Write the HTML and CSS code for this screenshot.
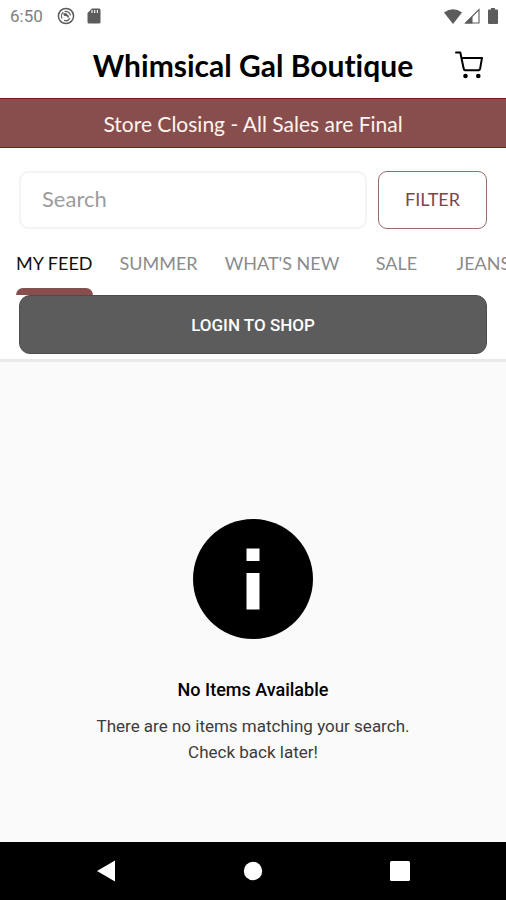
FILE: index.html
```html
<!DOCTYPE html>
<html lang="en">
<head>
<meta charset="utf-8">
<meta name="viewport" content="width=device-width, initial-scale=1">
<title>Whimsical Gal Boutique</title>
<link rel="stylesheet" href="styles.css">
</head>
<body>
<div class="app">
  <div class="status">
    <span class="clock">6:50</span>
    <svg class="status-sync" viewBox="0 0 18 18" width="18" height="18" aria-hidden="true">
      <circle cx="9" cy="9" r="7.6" fill="none" stroke="currentColor" stroke-width="1.5"/>
      <path d="M5.2 11.5A4.6 4.6 0 0 1 6.3 5.3M7.6 4.6A4.6 4.6 0 0 1 13.5 8.5M12.9 11.3A4.6 4.6 0 0 1 7 13.2" fill="none" stroke="currentColor" stroke-width="1.2"/>
      <path d="M6 6.4l3-.4 3 2.900-.7 2.300-1.600-2L7 8.700z" fill="currentColor"/>
    </svg>
    <svg class="status-card" viewBox="0 0 14 16" width="14" height="16" aria-hidden="true">
      <path d="M5 0.5h7a1.5 1.5 0 0 1 1.5 1.5v12a1.5 1.5 0 0 1-1.5 1.5H2A1.5 1.5 0 0 1 .5 14V5z" fill="currentColor"/>
      <path d="M5 2v3M7.7 2v3M10.4 2v3" stroke="#fff" stroke-width="1.1"/>
    </svg>
    <span class="status-right">
      <svg viewBox="0 0 18 15" width="18" height="15" aria-hidden="true"><path d="M9 15L0 3.400Q9-3 18 3.400z" fill="currentColor"/></svg>
      <svg viewBox="0 0 16 16" width="16" height="16" aria-hidden="true"><path d="M1.500 15L15 1.500V15z" fill="none" stroke="currentColor" stroke-width="1.100"/><path d="M1 15.500L8.500 8v7.500z" fill="currentColor"/></svg>
      <svg class="battery" viewBox="0 0 10 16" width="10" height="16" aria-hidden="true"><path d="M3 0h4v1.600h2a1 1 0 0 1 1 1V15a1 1 0 0 1-1 1H1a1 1 0 0 1-1-1V2.600a1 1 0 0 1 1-1h2z" fill="currentColor"/></svg>
    </span>
  </div>

  <header class="header">
    <h1 class="title">Whimsical Gal Boutique</h1>
    <button class="cart" type="button" aria-label="Cart">
      <svg viewBox="0 0 28 28" width="28" height="28" aria-hidden="true">
        <path d="M1 1.500H5.300L8.600 17.200Q9 19.300 11 19.300H22.800Q24.700 19.300 25.200 17.200L27 7H6.500" fill="none" stroke="currentColor" stroke-width="2" stroke-linejoin="round" stroke-linecap="round"/>
        <circle cx="10.500" cy="25" r="2.300" fill="currentColor"/><circle cx="23.300" cy="25" r="2.300" fill="currentColor"/>
      </svg>
    </button>
  </header>

  <p class="banner">Store Closing - All Sales are Final</p>

  <div class="controls">
    <form class="search-row">
      <input class="search" type="search" placeholder="Search" aria-label="Search">
      <button class="filter" type="button">FILTER</button>
    </form>
    <nav class="tabs" aria-label="Collections">
      <a class="tab tab-active" href="#feed">MY FEED</a>
      <a class="tab" href="#summer">SUMMER</a>
      <a class="tab" href="#new">WHAT'S NEW</a>
      <a class="tab" href="#sale">SALE</a>
      <a class="tab" href="#jeans">JEANS</a>
    </nav>
    <button class="login" type="button">LOGIN TO SHOP</button>
  </div>

  <main class="empty">
    <svg class="info" viewBox="0 0 120 120" width="120" height="120" aria-hidden="true">
      <circle cx="60" cy="60" r="60"/><path d="M53.500 29.500h13V42h-13zM53.500 54h13v36.500h-13z" fill="#fff"/>
    </svg>
    <h2 class="empty-title">No Items Available</h2>
    <p class="empty-text">There are no items matching your search.<br>Check back later!</p>
  </main>

  <div class="navbar">
    <button class="nav-button" type="button" aria-label="Back"><svg viewBox="0 0 20 22" width="20" height="22" aria-hidden="true"><path d="M1 11L19 .5v21z" fill="currentColor"/></svg></button>
    <button class="nav-button" type="button" aria-label="Home"><svg viewBox="0 0 20 20" width="20" height="20" aria-hidden="true"><circle cx="10" cy="10" r="9.200" fill="currentColor"/></svg></button>
    <button class="nav-button" type="button" aria-label="Recent apps"><svg viewBox="0 0 20 20" width="20" height="20" aria-hidden="true"><rect width="20" height="20" rx="1.500" fill="currentColor"/></svg></button>
  </div>
</div>
</body>
</html>
```
FILE: styles.css
```css
* { box-sizing: border-box; }
body { margin: 0; background: #fafafa; font-family: Lato, "Liberation Sans", sans-serif; font-variant-ligatures: none; color: #000; }
h1, h2, p { margin: 0; }
button { margin: 0; padding: 0; border: 0; background: none; font: inherit; color: inherit; }
svg { display: block; flex: none; }

.app { display: flex; flex-direction: column; min-height: 100vh; overflow: hidden; }

.status { display: flex; align-items: center; height: 32px; padding: 0 8px 0 10px; background: #fff; color: #5c5c5c; }
.clock { font-family: Roboto, sans-serif; font-size: 17px; color: #808080; }
.status-sync { margin-left: 14px; }
.status-card { margin-left: 12px; }
.status-right { display: flex; align-items: center; gap: 2px; margin-left: auto; }
.battery { margin-left: 6px; }

.header { display: grid; grid-template-columns: 28px 1fr 28px; align-items: center; height: 66px; padding: 0 23px; background: #fff; }
.title { grid-column: 2; font-size: 30px; line-height: 36px; font-weight: 700; text-align: center; white-space: nowrap; }
.cart { width: 28px; height: 28px; }

.banner { padding: 13px 16px 11px; border: solid #741c1c; border-width: 1px 0; background: #874e4d; color: #fff4ef; font-size: 21px; line-height: 24px; text-align: center; }

.controls { padding: 23px 19px 5px; border-bottom: 3px solid #e9e9e9; background: #fff; }
.search-row { display: flex; gap: 11px; }
.search { flex: 1; min-width: 0; height: 58px; padding: 0 22px 4px 21px; border: 2px solid #f4f4f4; border-radius: 9px; background: #fff; font: 22px/28px Lato, sans-serif; outline: 0; appearance: none; }
.search::placeholder { color: #9c9c9c; opacity: 1; }
.filter { width: 109px; height: 58px; padding-bottom: 2px; border: 1px solid #9b6c6e; border-radius: 9px; color: #7d4649; font-size: 18px; }

.tabs { display: flex; gap: 27px; height: 66px; margin: 0 -19px; padding-left: 16px; overflow: hidden; }
.tab { display: flex; flex: none; flex-direction: column; justify-content: space-between; min-width: 60px; padding-top: 23px; color: #8b8b8b; font-size: 18px; line-height: 22px; text-align: center; text-decoration: none; }
.tab-active { color: #111; }
.tab-active::after { content: ""; height: 7px; border-radius: 7px 7px 0 0; background: #874e4d; }

.login { display: block; width: 100%; height: 59px; border: 1px solid #4d4d4d; border-radius: 11px; background: #5c5c5c; color: #fff; font: 500 17px/20px Roboto, sans-serif; }

.empty { display: flex; flex: 1; flex-direction: column; align-items: center; padding: 157px 16px 40px; font-family: Roboto, sans-serif; text-align: center; }
.empty-title { margin-top: 39px; font-size: 18px; line-height: 24px; font-weight: 500; }
.empty-text { margin-top: 11px; color: #3c3c3c; font-size: 17px; line-height: 26px; font-weight: 400; }

.navbar { display: grid; grid-template-columns: repeat(3, 1fr); height: 58px; padding: 0 33px; background: #000; color: #fff; }
.nav-button { display: flex; align-items: center; justify-content: center; }
```
